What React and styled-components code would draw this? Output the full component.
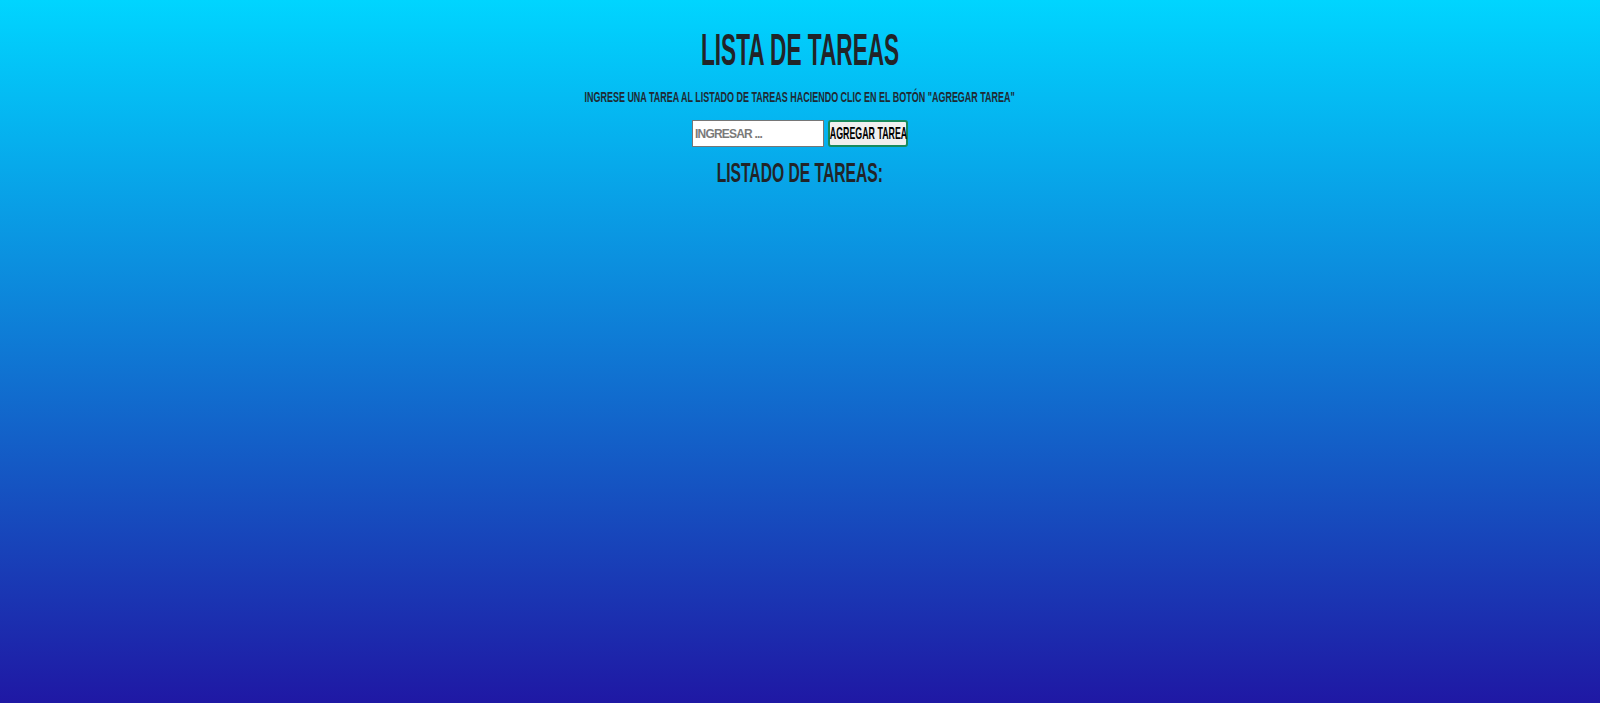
import React from 'react'
import styled, { createGlobalStyle } from 'styled-components'

const GlobalStyle = createGlobalStyle`
  html, body {
    margin: 0;
    padding: 0;
  }
  body {
    font-family: "Liberation Sans", Arial, sans-serif;
    font-weight: 700;
    color: #212529;
  }
`

const Page = styled.div`
  min-height: 100vh;
  box-sizing: border-box;
  padding-top: 27px;
  display: flex;
  flex-direction: column;
  align-items: center;
  background: linear-gradient(180deg, #00d5ff 0%, #0f78d4 50%, #1f18a4 100%);
`

// condensed caps, squeezed horizontally to get the tall narrow look
const Squeeze = styled.span`
  display: inline-block;
  white-space: nowrap;
  flex-shrink: 0;
  transform: scaleX(${p => p.$x});
  transform-origin: center;
`

const Title = styled.h1`
  margin: 0;
  font-size: 45px;
  line-height: 1;
  text-transform: uppercase;
  color: #222428;
`

const Subtitle = styled.p`
  margin: 18px 0 0;
  font-size: 14px;
  line-height: 1;
  text-transform: uppercase;
  color: #1f2a33;
`

const Form = styled.form`
  margin-top: 16px;
  display: flex;
  gap: 4px;
  height: 27px;
`

const Input = styled.input`
  box-sizing: border-box;
  width: 132px;
  height: 27px;
  padding: 0 2px;
  border: 1px solid #767676;
  border-radius: 0;
  background: #fff;
  font-family: inherit;
  font-weight: 700;
  font-size: 12px;
  letter-spacing: -0.8px;
  outline: none;
  &::placeholder {
    color: #7a7a7a;
    text-transform: uppercase;
  }
`

const Button = styled.button`
  box-sizing: border-box;
  width: 80px;
  height: 27px;
  padding: 0;
  display: flex;
  align-items: center;
  justify-content: center;
  overflow: visible;
  border: 2px solid #178a5e;
  border-radius: 3px;
  background: #efefef;
  color: #000;
  font-family: inherit;
  font-weight: 700;
  font-size: 17px;
  text-transform: uppercase;
  cursor: pointer;
`

const ListTitle = styled.h2`
  margin: 12px 0 0;
  font-size: 28px;
  line-height: 1;
  text-transform: uppercase;
  color: #222428;
`

export default function App() {
  return (
    <>
      <GlobalStyle />
      <Page>
        <Title><Squeeze $x={0.503}>Lista de tareas</Squeeze></Title>
        <Subtitle>
          <Squeeze $x={0.641}>Ingrese una tarea al listado de tareas haciendo clic en el botón "Agregar tarea"</Squeeze>
        </Subtitle>
        <Form onSubmit={e => e.preventDefault()}>
          <Input type="text" placeholder="Ingresar ..." />
          <Button type="submit"><Squeeze $x={0.52}>Agregar tarea</Squeeze></Button>
        </Form>
        <ListTitle><Squeeze $x={0.559}>Listado de tareas:</Squeeze></ListTitle>
      </Page>
    </>
  )
}
